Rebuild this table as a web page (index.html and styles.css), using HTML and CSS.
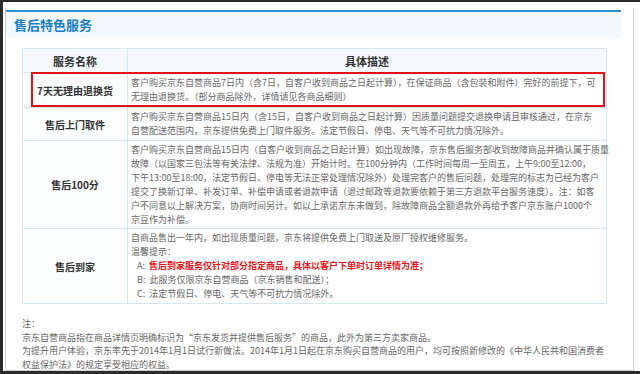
FILE: index.html
```html
<!DOCTYPE html>
<html lang="zh-CN">
<head>
<meta charset="utf-8">
<link rel="stylesheet" href="styles.css">
</head>
<body>
<div class="frame">
  <div class="panel">
    <div class="section">
      <div class="band"><h2 class="title">售后特色服务</h2></div>
      <div class="table-wrap">
        <table class="svc">
          <colgroup><col class="c1"><col class="c2"></colgroup>
          <thead>
            <tr class="rh"><th>服务名称</th><th>具体描述</th></tr>
          </thead>
          <tbody>
            <tr class="r1">
              <td class="name">7天无理由退换货</td>
              <td class="desc">
                <span class="ln">客户购买京东自营商品7日内（含7日，自客户收到商品之日起计算），在保证商品（含包装和附件）完好的前提下，可</span>
                <span class="ln">无理由退换货。（部分商品除外，详情请见各商品细则）</span>
              </td>
            </tr>
            <tr class="r2">
              <td class="name">售后上门取件</td>
              <td class="desc">
                <span class="ln">客户购买京东自营商品15日内（含15日，自客户收到商品之日起计算）因质量问题提交退换申请且审核通过，在京东</span>
                <span class="ln">自营配送范围内，京东提供免费上门取件服务。法定节假日、停电、天气等不可抗力情况除外。</span>
              </td>
            </tr>
            <tr class="r3">
              <td class="name">售后100分</td>
              <td class="desc">
                <span class="ln">客户购买京东自营商品15日内（自客户收到商品之日起计算）如出现故障，京东售后服务部收到故障商品并确认属于质量</span>
                <span class="ln">故障（以国家三包法等有关法律、法规为准）开始计时。在100分钟内（工作时间每周一至周五，上午9:00至12:00，</span>
                <span class="ln">下午13:00至18:00，法定节假日、停电等无法正常处理情况除外）处理完客户的售后问题，处理完的标志为已经为客户</span>
                <span class="ln">提交了换新订单、补发订单、补偿申请或者退款申请（退过邮政等退款要依赖于第三方退款平台服务速度）。注：如客</span>
                <span class="ln">户不同意以上解决方案，协商时间另计。如以上承诺京东未做到，除故障商品全额退款外再给予客户京东账户1000个</span>
                <span class="ln">京豆作为补偿。</span>
              </td>
            </tr>
            <tr class="r4">
              <td class="name">售后到家</td>
              <td class="desc">
                <span class="ln">自商品售出一年内，如出现质量问题，京东将提供免费上门取送及原厂授权维修服务。</span>
                <span class="ln">温馨提示：</span>
                <span class="ln item">A:&nbsp; <b class="warn">售后到家服务仅针对部分指定商品，具体以客户下单时订单详情为准；</b></span>
                <span class="ln item">B:&nbsp; 此服务仅限京东自营商品（京东销售和配送）；</span>
                <span class="ln item">C:&nbsp; 法定节假日、停电、天气等不可抗力情况除外。</span>
              </td>
            </tr>
          </tbody>
        </table>
        <div class="mark"></div>
      </div>
      <div class="notes">
        <p class="nl">注：</p>
        <p class="nl">京东自营商品指在商品详情页明确标识为“京东发货并提供售后服务”的商品，此外为第三方卖家商品。</p>
        <p class="nl">为提升用户体验，京东率先于2014年1月1日试行新做法。2014年1月1日起在京东购买自营商品的用户，均可按照新修改的《中华人民共和国消费者</p>
        <p class="nl">权益保护法》的规定享受相应的权益。</p>
      </div>
    </div>
  </div>
</div>
</body>
</html>
```

FILE: styles.css
```css
html, body {
  margin: 0;
  padding: 0;
}
body {
  background: #2b2b2b;
  width: 640px;
  height: 374px;
  overflow: hidden;
  font-family: "Noto Sans CJK SC", "Liberation Sans", sans-serif;
}
.frame {
  margin: 2px 0 0 3px;
  height: 369px;
  background: #ffffff;
  display: flex;
}
.panel {
  margin: 6px 0 0 2px;
  width: 627px;
  height: 362px;
  border-left: 1px solid #cfcfcf;
  border-right: 1px solid #cfcfcf;
  border-bottom: 1px solid #cfcfcf;
  background: #ffffff;
}
.section {
  margin: 2px 12px 0 0;
}
.band {
  border-top: 2px solid #2b90cd;
  background: #f2f8fc;
  height: 26px;
}
.title {
  margin: 0;
  padding-left: 8px;
  font-size: 13px;
  line-height: 26px;
  font-weight: bold;
  color: #1c7fc2;
}
.table-wrap {
  position: relative;
  margin: 10px 0 0 16px;
  width: 585px;
}
.svc {
  width: 585px;
  border-collapse: collapse;
  table-layout: fixed;
  background: #f9fbfd;
}
.c1 { width: 105px; }
.svc th, .svc td {
  border: 1px solid #d8e6f0;
  padding: 0;
}
.svc th {
  font-size: 11px;
  font-weight: bold;
  color: #333333;
  background: #f5f9fc;
  text-align: center;
}
.rh { height: 24px; }
.r1 { height: 35px; }
.r2 { height: 33px; }
.r3 { height: 88px; }
.r4 { height: 75px; }
.name {
  text-align: center;
  vertical-align: middle;
  font-size: 10px;
  font-weight: bold;
  color: #333333;
  background: #fbfdfe;
}
.desc {
  vertical-align: middle;
  font-size: 9px;
  line-height: 14px;
  color: #666666;
  background: #ffffff;
}
.svc td.desc { padding-left: 3px; }
.ln {
  display: block;
  white-space: nowrap;
}
.item { padding-left: 6px; }
.warn {
  color: #e8161c;
  font-weight: bold;
}
.mark {
  position: absolute;
  left: 9px;
  top: 24px;
  width: 570px;
  height: 31px;
  border: 2px solid #e0121a;
}
.notes {
  margin: 13px 0 0 16px;
  font-size: 9px;
  line-height: 13.5px;
  color: #666666;
}
.nl {
  margin: 0;
  white-space: nowrap;
}
```
